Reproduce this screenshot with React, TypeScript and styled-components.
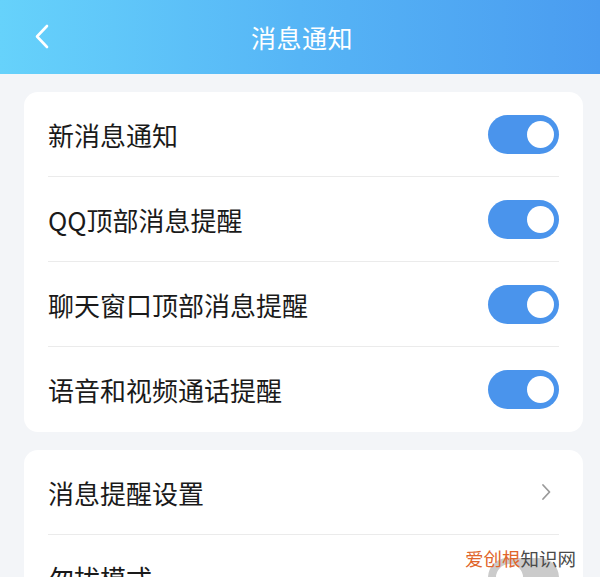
import React from "react";
import styled, { createGlobalStyle } from "styled-components";

const GlobalStyle = createGlobalStyle`
  html, body {
    margin: 0;
    padding: 0;
    background: #f3f5f8;
    height: 577px;
    overflow: hidden;
    font-family: "Noto Sans CJK SC", "Noto Sans", sans-serif;
  }
`;

const Page = styled.div`
  position: relative;
  width: 600px;
  height: 577px;
  overflow: hidden;
  background: #f3f5f8;
`;

const Header = styled.header`
  height: 74px;
  display: flex;
  align-items: center;
  justify-content: center;
  position: relative;
  background: linear-gradient(90deg, #66d2fb 0%, #56b5f6 50%, #4a9cf0 100%);
`;

const BackButton = styled.div`
  position: absolute;
  left: 33px;
  top: 23px;
  width: 18px;
  height: 27px;
`;

const Title = styled.h1`
  margin: 0 0 0 4px;
  color: #ffffff;
  font-size: 25px;
  font-weight: 400;
  letter-spacing: 0.5px;
`;

const Body = styled.div`
  display: flex;
  flex-direction: column;
  gap: 18px;
  padding: 18px 17px 0 24px;
`;

const Card = styled.section`
  background: #ffffff;
  border-radius: 14px;
  padding: 0 24px;
`;

const Row = styled.div<{ $last?: boolean }>`
  height: 85px;
  display: flex;
  align-items: center;
  justify-content: space-between;
  border-bottom: ${(p) => (p.$last ? "none" : "1px solid #ebebeb")};
  box-sizing: border-box;
`;

const Label = styled.span`
  font-size: 26px;
  color: #1a1a1a;
`;

const Toggle = styled.div<{ $on?: boolean }>`
  width: 71px;
  height: 39px;
  border-radius: 20px;
  background: ${(p) => (p.$on ? "#4a94ec" : "#cbcbcb")};
  position: relative;
  flex-shrink: 0;

  &::after {
    content: "";
    position: absolute;
    top: 6px;
    left: ${(p) => (p.$on ? "39px" : "8px")};
    width: 27px;
    height: 27px;
    border-radius: 50%;
    background: #ffffff;
  }
`;

const Chevron = styled.div`
  width: 14px;
  height: 20px;
  margin-right: 6px;
`;

const Watermark = styled.div`
  position: absolute;
  right: 24px;
  bottom: 9px;
  font-size: 18.5px;
  line-height: 20px;
  color: #4a4a4a;
`;

const Brand = styled.span`
  color: #e0652b;
`;

const toggles = ["新消息通知", "QQ顶部消息提醒", "聊天窗口顶部消息提醒", "语音和视频通话提醒"];

export default function App() {
  return (
    <Page>
      <GlobalStyle />
      <Header>
        <BackButton>
          <svg width="18" height="27" viewBox="0 0 18 27" fill="none">
            <path d="M14 3 L4 13.5 L14 24" stroke="#ffffff" strokeWidth="2.6" strokeLinecap="round" strokeLinejoin="round" />
          </svg>
        </BackButton>
        <Title>消息通知</Title>
      </Header>
      <Body>
        <Card>
          {toggles.map((t, i) => (
            <Row key={t} $last={i === toggles.length - 1}>
              <Label>{t}</Label>
              <Toggle $on />
            </Row>
          ))}
        </Card>
        <Card>
          <Row>
            <Label>消息提醒设置</Label>
            <Chevron>
              <svg width="14" height="20" viewBox="0 0 14 20" fill="none">
                <path d="M4 3 L10.5 10 L4 17" stroke="#9a9a9a" strokeWidth="1.8" strokeLinecap="round" strokeLinejoin="round" />
              </svg>
            </Chevron>
          </Row>
          <Row $last>
            <Label>勿扰模式</Label>
            <Toggle />
          </Row>
        </Card>
      </Body>
      <Watermark>
        <Brand>爱创根</Brand>知识网
      </Watermark>
    </Page>
  );
}
